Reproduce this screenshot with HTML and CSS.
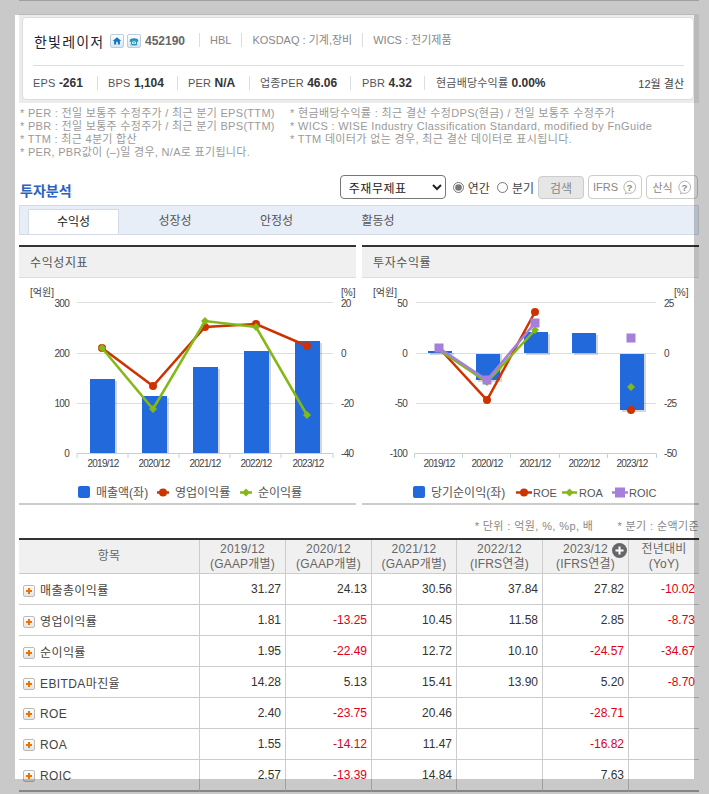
FILE: index.html
```html
<!DOCTYPE html>
<html lang="ko">
<head>
    <meta charset="UTF-8">
    <title>한빛레이저 투자분석</title>
    <link rel="stylesheet" href="styles.css">
</head>
<body>
<div class="page">
    <div class="summary">
        <div class="card">
            <div class="card-top">
                <span class="name">한빛레이저</span>
                <span class="ico">
                    <svg width="14" height="14" viewBox="0 0 14 14"><path d="M7 2.5 2 7h1.6v4h6.8V7H12z M6 8h2v3H6z" fill="#0b78c8" fill-rule="evenodd"/></svg>
                </span>
                <span class="ico">
                    <svg width="14" height="14" viewBox="0 0 14 14"><path d="M2 6.5C2 3 12 3 12 6.5V8H9.5V6.6h-5V8H2z" fill="#1b93b8"/><ellipse cx="7" cy="9" rx="3.2" ry="2.4" fill="none" stroke="#1b93b8" stroke-width="1.2"/><circle cx="7" cy="9" r=".9" fill="#1b93b8"/><path d="M3 11.5h8" stroke="#1b93b8"/></svg>
                </span>
                <b class="code">452190</b>
                <span class="info first">HBL</span>
                <span class="info">KOSDAQ : 기계,장비</span>
                <span class="info">WICS : 전기제품</span>
            </div>
            <div class="card-bottom">
                <span class="stat st-eps">EPS <b>-261</b></span>
                <span class="stat st-bps">BPS <b>1,104</b></span>
                <span class="stat st-per">PER <b>N/A</b></span>
                <span class="stat st-sec">업종PER <b>46.06</b></span>
                <span class="stat st-pbr">PBR <b>4.32</b></span>
                <span class="stat st-div">현금배당수익률 <b>0.00%</b></span>
                <span class="settle">12월 결산</span>
            </div>
        </div>
    </div>

    <div class="notes">
        <ul class="note-col left">
            <li>* PER : 전일 보통주 수정주가 / 최근 분기 EPS(TTM)</li>
            <li>* PBR : 전일 보통주 수정주가 / 최근 분기 BPS(TTM)</li>
            <li>* TTM : 최근 4분기 합산</li>
            <li>* PER, PBR값이 (–)일 경우, N/A로 표기됩니다.</li>
        </ul>
        <ul class="note-col">
            <li>* 현금배당수익률 : 최근 결산 수정DPS(현금) / 전일 보통주 수정주가</li>
            <li>* WICS : WISE Industry Classification Standard, modified by FnGuide</li>
            <li>* TTM 데이터가 없는 경우, 최근 결산 데이터로 표시됩니다.</li>
        </ul>
    </div>

    <div class="toolbar">
        <h2>투자분석</h2>
        <div class="controls">
            <select class="sel"><option>주재무제표</option></select>
            <label class="radio"><input type="radio" name="term" checked>연간</label>
            <label class="radio"><input type="radio" name="term">분기</label>
            <button class="btn search">검색</button>
            <button class="btn help ifrs">IFRS
                <svg width="15" height="15" viewBox="0 0 17 17"><path d="M8.5 1.2a7 7 0 1 1-2.6 13.5L4 15.8l.4-2.4A7 7 0 0 1 8.5 1.2z" fill="#fff" stroke="#aaa"/><text x="8.5" y="12.5" text-anchor="middle" class="q">?</text></svg>
            </button>
            <button class="btn help calc">산식
                <svg width="15" height="15" viewBox="0 0 17 17"><path d="M8.5 1.2a7 7 0 1 1-2.6 13.5L4 15.8l.4-2.4A7 7 0 0 1 8.5 1.2z" fill="#fff" stroke="#aaa"/><text x="8.5" y="12.5" text-anchor="middle" class="q">?</text></svg>
            </button>
        </div>
    </div>

    <div class="tabs">
        <span class="tab on">수익성</span>
        <span class="tab">성장성</span>
        <span class="tab">안정성</span>
        <span class="tab">활동성</span>
    </div>

    <div class="charts">
        <div class="panel">
            <div class="panel-head">수익성지표</div>
            <svg class="chart" width="337" height="225" viewBox="19 278 337 225">
                <g class="grid">
                    <path d="M77 302.5H333M77 353.5H333M77 403.5H333"/>
                </g>
                <g class="shadow">
                    <rect x="92" y="381" width="25" height="72"/>
                    <rect x="144" y="398" width="25" height="55"/>
                    <rect x="195" y="369" width="25" height="84"/>
                    <rect x="246" y="353" width="25" height="100"/>
                    <rect x="297" y="343" width="25" height="110"/>
                </g>
                <g class="bar">
                    <rect x="90" y="379" width="25" height="74"/>
                    <rect x="142" y="396" width="25" height="57"/>
                    <rect x="193" y="367" width="25" height="86"/>
                    <rect x="244" y="351" width="25" height="102"/>
                    <rect x="295" y="341" width="25" height="112"/>
                </g>
                <path class="axis" d="M77 458V453.5H333V458M128 453.5V458M179 453.5V458M230 453.5V458M281 453.5V458"/>
                <polyline class="ln-red" points="102,348 153,386 205,327 256,324 307,346"/>
                <g class="dot-red">
                    <circle cx="102" cy="348" r="4"/><circle cx="153" cy="386" r="4"/><circle cx="205" cy="327" r="4"/><circle cx="256" cy="324" r="4"/><circle cx="307" cy="346" r="4"/>
                </g>
                <polyline class="ln-green" points="102,348 153,409 205,321 256,327 307,415"/>
                <g class="dot-green">
                    <path d="M102 344l4 4-4 4-4-4z"/><path d="M153 405l4 4-4 4-4-4z"/><path d="M205 317l4 4-4 4-4-4z"/><path d="M256 323l4 4-4 4-4-4z"/><path d="M307 411l4 4-4 4-4-4z"/>
                </g>
                <text class="unit" x="30" y="296">[억원]</text>
                <text class="unit" x="341" y="296">[%]</text>
                <g class="tick end">
                    <text x="69" y="307">300</text><text x="69" y="357">200</text><text x="69" y="407">100</text><text x="69" y="457">0</text>
                </g>
                <g class="tick">
                    <text x="341" y="307">20</text><text x="341" y="357">0</text><text x="341" y="407">-20</text><text x="341" y="457">-40</text>
                </g>
                <g class="tick mid">
                    <text x="103" y="467">2019/12</text><text x="154" y="467">2020/12</text><text x="205" y="467">2021/12</text><text x="256" y="467">2022/12</text><text x="308" y="467">2023/12</text>
                </g>
                <rect class="key-bar" x="78" y="486" width="12" height="12" rx="2"/>
                <text class="legend" x="96" y="497">매출액(좌)</text>
                <path class="ln-red" d="M157 492.5H169"/><circle class="key-red" cx="163" cy="492.5" r="4"/>
                <text class="legend" x="175" y="497">영업이익률</text>
                <path class="ln-green" d="M240 492.5H252"/><path class="key-green" d="M246 488.5l4 4-4 4-4-4z"/>
                <text class="legend" x="258" y="497">순이익률</text>
            </svg>
        </div>
        <div class="panel">
            <div class="panel-head">투자수익률</div>
            <svg class="chart" width="337" height="225" viewBox="362 278 337 225">
                <g class="grid">
                    <path d="M416 302.5H656M416 353.5H656M416 403.5H656"/>
                </g>
                <g class="shadow">
                    <rect x="430" y="353" width="24" height="2"/>
                    <rect x="478" y="354" width="24" height="28"/>
                    <rect x="526" y="334" width="24" height="21"/>
                    <rect x="574" y="335" width="24" height="20"/>
                    <rect x="622" y="354" width="24" height="58"/>
                </g>
                <g class="bar">
                    <rect x="428" y="351" width="24" height="2"/>
                    <rect x="476" y="354" width="24" height="26"/>
                    <rect x="524" y="332" width="24" height="21"/>
                    <rect x="572" y="333" width="24" height="20"/>
                    <rect x="620" y="354" width="24" height="56"/>
                </g>
                <path class="axis" d="M414.5 458V453.5H656.5V458M462.5 453.5V458M510.5 453.5V458M559.5 453.5V458M607.5 453.5V458"/>
                <polyline class="ln-red" points="439,348 487,400 535,312"/>
                <g class="dot-red">
                    <circle cx="487" cy="400" r="4"/><circle cx="535" cy="312" r="4"/><circle cx="631" cy="410" r="4"/>
                </g>
                <polyline class="ln-green" points="439,350 487,382 535,330"/>
                <g class="dot-green">
                    <path d="M487 378l4 4-4 4-4-4z"/><path d="M535 326l4 4-4 4-4-4z"/><path d="M631 383l4 4-4 4-4-4z"/>
                </g>
                <polyline class="ln-purple" points="439,348 487,380 535,323"/>
                <g class="dot-purple">
                    <rect x="434.5" y="343.5" width="9" height="9"/><rect x="482.5" y="375.5" width="9" height="9"/><rect x="530.5" y="318.5" width="9" height="9"/><rect x="626.5" y="333.5" width="9" height="9"/>
                </g>
                <text class="unit" x="373" y="296">[억원]</text>
                <text class="unit" x="674" y="296">[%]</text>
                <g class="tick end">
                    <text x="407" y="307">50</text><text x="407" y="357">0</text><text x="407" y="407">-50</text><text x="407" y="457">-100</text>
                </g>
                <g class="tick">
                    <text x="664" y="307">25</text><text x="664" y="357">0</text><text x="664" y="407">-25</text><text x="664" y="457">-50</text>
                </g>
                <g class="tick mid">
                    <text x="439" y="467">2019/12</text><text x="487" y="467">2020/12</text><text x="535" y="467">2021/12</text><text x="584" y="467">2022/12</text><text x="632" y="467">2023/12</text>
                </g>
                <rect class="key-bar" x="413" y="486" width="12" height="12" rx="2"/>
                <text class="legend" x="431" y="497">당기순이익(좌)</text>
                <path class="ln-red" d="M516 492.5H532"/><circle class="key-red" cx="524" cy="492.5" r="4"/>
                <text class="legend latin" x="533" y="497">ROE</text>
                <path class="ln-green" d="M562 492.5H577"/><path class="key-green" d="M569.5 488.5l4 4-4 4-4-4z"/>
                <text class="legend latin" x="579" y="497">ROA</text>
                <path class="ln-purple" d="M612 492.5H628"/><rect class="key-purple" x="615" y="487.5" width="10" height="10"/>
                <text class="legend latin" x="629" y="497">ROIC</text>
            </svg>
        </div>
    </div>

    <div class="unit-row">
        <span>* 단위 : 억원, %, %p, 배</span>
        <span>* 분기 : 순액기준</span>
    </div>

    <table class="data">
        <colgroup>
            <col class="c-name"><col class="c-86"><col class="c-86"><col class="c-85"><col class="c-86"><col class="c-86"><col class="c-71">
        </colgroup>
        <thead>
            <tr>
                <th>항목</th>
                <th>2019/12<br>(GAAP개별)</th>
                <th>2020/12<br>(GAAP개별)</th>
                <th>2021/12<br>(GAAP개별)</th>
                <th>2022/12<br>(IFRS연결)</th>
                <th class="has-more">2023/12<br>(IFRS연결)<span class="more"><svg width="15" height="15" viewBox="0 0 15 15"><circle cx="7.5" cy="7.5" r="7.5" fill="#666"/><path d="M7.5 3.5v8M3.5 7.5h8" stroke="#fff" stroke-width="2"/></svg></span></th>
                <th>전년대비<br>(YoY)</th>
            </tr>
        </thead>
        <tbody>
            <tr><td><i class="plus"></i>매출총이익률</td><td>31.27</td><td>24.13</td><td>30.56</td><td>37.84</td><td>27.82</td><td class="neg">-10.02</td></tr>
            <tr><td><i class="plus"></i>영업이익률</td><td>1.81</td><td class="neg">-13.25</td><td>10.45</td><td>11.58</td><td>2.85</td><td class="neg">-8.73</td></tr>
            <tr><td><i class="plus"></i>순이익률</td><td>1.95</td><td class="neg">-22.49</td><td>12.72</td><td>10.10</td><td class="neg">-24.57</td><td class="neg">-34.67</td></tr>
            <tr><td><i class="plus"></i>EBITDA마진율</td><td>14.28</td><td>5.13</td><td>15.41</td><td>13.90</td><td>5.20</td><td class="neg">-8.70</td></tr>
            <tr><td><i class="plus"></i>ROE</td><td>2.40</td><td class="neg">-23.75</td><td>20.46</td><td></td><td class="neg">-28.71</td><td></td></tr>
            <tr><td><i class="plus"></i>ROA</td><td>1.55</td><td class="neg">-14.12</td><td>11.47</td><td></td><td class="neg">-16.82</td><td></td></tr>
            <tr class="last"><td><i class="plus"></i>ROIC</td><td>2.57</td><td class="neg">-13.39</td><td>14.84</td><td></td><td>7.63</td><td></td></tr>
        </tbody>
    </table>
</div>
<div class="dim"></div>
</body>
</html>
```

FILE: styles.css
```css
html, body {
    margin: 0;
    padding: 0;
    height: 794px;
    overflow: hidden;
    background-color: #fff;
}

body {
    font-family: "Liberation Sans", "Noto Sans CJK KR", sans-serif;
    font-size: 12px;
    color: #444;
}

/* grey backdrop around the popup window */
.dim {
    position: absolute;
    left: 15px;
    top: 15px;
    width: 679px;
    height: 764px;
    box-shadow: 0 0 0 900px rgba(0, 0, 0, 0.21);
}

.page {
    width: 680px;
    margin-left: 19px;
    border-top: 1px solid #ccc;
}

/* summary card */
.summary {
    margin-top: 13px;
    height: 89px;
    box-sizing: border-box;
    padding: 3px 5px 3px 3px;
    background-color: #ececec;
}

.card {
    height: 83px;
    box-sizing: border-box;
    padding: 0 9px 0 10px;
    background-color: #fff;
    border: 1px solid #ddd;
    border-radius: 4px;
}

.card-top {
    display: flex;
    align-items: center;
    box-sizing: border-box;
    height: 48px;
    padding-bottom: 2px;
    border-bottom: 1px solid #ddd;
}

.name {
    font-size: 14px;
    letter-spacing: 1.2px;
    color: #223;
    width: 76px;
    margin-left: 1px;
}

.ico {
    display: inline-flex;
    align-items: center;
    justify-content: center;
    width: 12px;
    height: 12px;
    margin-right: 3px;
    border: 1px solid #bcd;
    border-radius: 2px;
    background: linear-gradient(#fff, #d8e6f0);
}

.ico svg {
    width: 12px;
    height: 12px;
}

.code {
    margin-left: 1px;
    color: #666;
    width: 54px;
}

.info {
    height: 14px;
    line-height: 14px;
    padding: 0 10px;
    border-left: 1px solid #ddd;
    font-size: 11px;
    color: #888;
    position: relative;
    top: -1px;
}

.card-bottom {
    display: flex;
    align-items: center;
    height: 33px;
    position: relative;
}

.stat {
    box-sizing: border-box;
    height: 14px;
    line-height: 14px;
    white-space: nowrap;
    font-size: 11px;
    color: #555;
    letter-spacing: 0.2px;
    padding-left: 10px;
    border-left: 1px solid #ddd;
}

.stat b {
    font-size: 12px;
    color: #333;
    letter-spacing: 0;
}

.st-eps { width: 64px; padding-left: 0; border-left: 0; }
.st-bps { width: 80px; }
.st-per { width: 72px; }
.st-sec { width: 101px; }
.st-pbr { width: 74px; padding-left: 11px; }
.st-div { width: 200px; padding-left: 11px; }

.settle {
    margin-left: auto;
    font-size: 11px;
    color: #444;
}

/* footnotes */
.notes {
    display: flex;
    margin-top: 4px;
    height: 52px;
    padding-left: 1px;
}

.note-col {
    list-style: none;
    margin: 0;
    padding: 0;
    font-size: 11px;
    line-height: 13px;
    color: #9a9a9a;
    letter-spacing: 0.35px;
    white-space: nowrap;
}

.note-col.left {
    width: 270px;
    letter-spacing: 0.3px;
}

/* title and search controls */
.toolbar {
    display: flex;
    justify-content: space-between;
    align-items: center;
    height: 24px;
    margin-top: 16px;
    padding: 0 1px;
}

.toolbar h2 {
    margin: 6px 0 0;
    font-size: 14px;
    font-weight: bold;
    color: #2a62c0;
}

.controls {
    display: flex;
    align-items: center;
    height: 24px;
}

.sel {
    width: 106px;
    height: 24px;
    padding: 0 0 0 4px;
    margin-right: 7px;
    font-family: "Noto Sans CJK KR", sans-serif;
    font-size: 12px;
    letter-spacing: 0.5px;
    background-color: #fff;
    border: 1px solid #767676;
    border-radius: 4px;
    color: #222;
}

.radio {
    display: flex;
    align-items: center;
    color: #444;
    margin-right: 7px;
}

.radio input {
    width: 11px;
    height: 11px;
    margin: 0 4px 0 0;
    accent-color: #777;
}

.radio + .radio {
    margin-right: 4px;
}

.btn {
    display: flex;
    align-items: center;
    justify-content: center;
    box-sizing: border-box;
    height: 24px;
    padding: 0;
    font-family: inherit;
    font-size: 12px;
    color: #888;
    background-color: #fff;
    border: 1px solid #ccc;
    border-radius: 4px;
}

.search {
    width: 46px;
    height: 23px;
    background-color: #e6e6e6;
    margin-right: 4px;
}

.help {
    gap: 4px;
    font-size: 11px;
}

.ifrs {
    width: 54px;
    margin-right: 4px;
}

.calc {
    width: 52px;
}

.q {
    font-size: 11px;
    font-weight: bold;
    fill: #888;
}

/* tabs */
.tabs {
    display: flex;
    align-items: flex-end;
    gap: 10.5px;
    height: 30px;
    box-sizing: border-box;
    margin-top: 6px;
    padding-left: 8px;
    background-color: #e8eef8;
    border: 1px solid #d3dbe6;
}

.tab {
    box-sizing: border-box;
    width: 91px;
    height: 25px;
    line-height: 25px;
    text-align: center;
    color: #555;
}

.tab.on {
    color: #222;
    background-color: #fff;
    border: 1px solid #d3dbe6;
    border-bottom: 0;
}

/* chart panels */
.charts {
    display: flex;
    gap: 6px;
    margin-top: 10px;
}

.panel {
    width: 337px;
    border-top: 2px solid #333;
    border-bottom: 2px solid #ccc;
}

.panel-head {
    height: 30px;
    line-height: 32px;
    padding-left: 11px;
    background-color: #f0f0f0;
    border-bottom: 1px solid #ddd;
    color: #555;
    letter-spacing: 0.6px;
}

.chart {
    display: block;
}

.grid path {
    fill: none;
    stroke: #ddd;
}

.shadow rect {
    fill: #000;
    opacity: 0.16;
}

.bar rect, .key-bar {
    fill: #226adb;
}

.axis {
    fill: none;
    stroke: #c0d0e0;
}

.ln-red, .ln-green, .ln-purple {
    fill: none;
    stroke-width: 2.5;
}

.ln-red { stroke: #cc3300; }
.ln-green { stroke: #84b816; }
.ln-purple { stroke: #a67fdc; }
.dot-red circle, .key-red { fill: #cc3300; }
.dot-green path, .key-green { fill: #84b816; }
.dot-purple rect, .key-purple { fill: #a67fdc; }

.unit {
    font-size: 10px;
    fill: #444;
}

.tick text {
    font-size: 10px;
    letter-spacing: -0.7px;
    fill: #444;
}

.tick.end text { text-anchor: end; }
.tick.mid text { text-anchor: middle; }

.legend {
    font-size: 12px;
    fill: #555;
}

.legend.latin {
    font-size: 11px;
}

/* table */
.unit-row {
    display: flex;
    justify-content: flex-end;
    align-items: flex-end;
    gap: 24px;
    height: 28px;
    padding-bottom: 5px;
    font-size: 11px;
    letter-spacing: 0.4px;
    color: #888;
    white-space: nowrap;
    overflow: hidden;
}

.data {
    table-layout: fixed;
    width: 680px;
    border-collapse: separate;
    border-spacing: 0;
    border-top: 2px solid #333;
}

.c-name { width: 180px; }
.c-86 { width: 86px; }
.c-85 { width: 85px; }
.c-71 { width: 71px; }

.data th {
    height: 33px;
    padding: 0;
    font-weight: normal;
    line-height: 15px;
    letter-spacing: 0.2px;
    color: #666;
    background-color: #f0f0f0;
    border-bottom: 1px solid #ccc;
    border-left: 1px solid #ccc;
}

.data td {
    height: 30px;
    padding: 0 4px 0 0;
    text-align: right;
    color: #333;
    border-bottom: 1px solid #ccc;
    border-left: 1px solid #ccc;
}

.data th:first-child,
.data td:first-child {
    border-left: 0;
}

.data td:first-child {
    padding: 0 0 0 4px;
    text-align: left;
    color: #444;
    letter-spacing: 0.4px;
    white-space: nowrap;
}

.data td.neg {
    color: #e00016;
}

.data .last td {
    border-bottom: 2px solid #aaa;
}

.has-more {
    position: relative;
}

.more {
    position: absolute;
    right: 1px;
    top: 3px;
    line-height: 0;
}

/* expand button in front of each row */
.plus {
    display: inline-block;
    box-sizing: border-box;
    position: relative;
    top: 2px;
    width: 12px;
    height: 12px;
    margin-right: 5px;
    border: 1px solid #bbb;
    border-radius: 2px;
    background: linear-gradient(#fff, #e4e4e4);
}

.plus::before,
.plus::after {
    content: "";
    position: absolute;
    background-color: #f07000;
}

.plus::before {
    left: 2px;
    top: 4px;
    width: 6px;
    height: 2px;
}

.plus::after {
    left: 4px;
    top: 2px;
    width: 2px;
    height: 6px;
}
```
